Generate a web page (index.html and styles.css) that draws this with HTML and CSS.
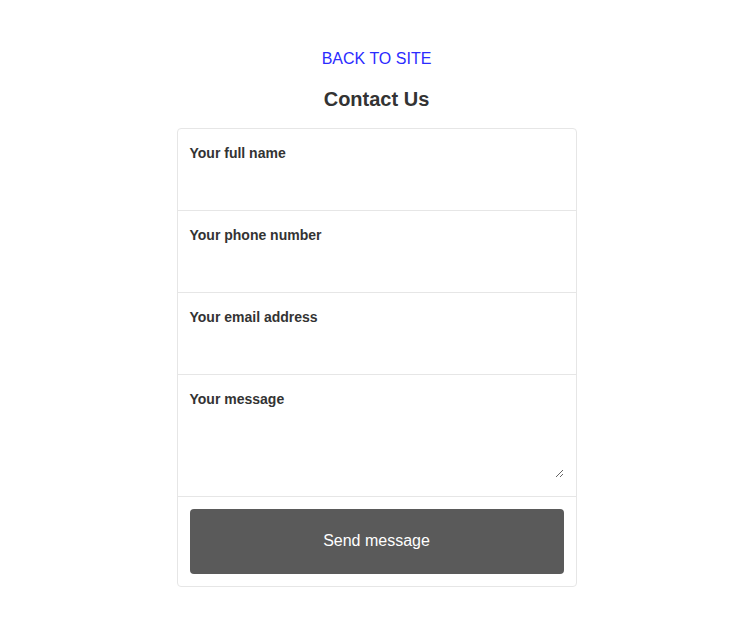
FILE: index.html
```html
<!DOCTYPE html>
<html lang="en">
<head>
<meta charset="utf-8">
<title>Contact Us</title>
<link rel="stylesheet" href="styles.css">
</head>
<body>
<main class="page">
  <a class="back" href="#">BACK TO SITE</a>
  <h1 class="title">Contact Us</h1>
  <form class="card">
    <div class="field">
      <label class="label" for="name">Your full name</label>
      <input class="input" id="name" type="text">
    </div>
    <div class="field">
      <label class="label" for="phone">Your phone number</label>
      <input class="input" id="phone" type="tel">
    </div>
    <div class="field">
      <label class="label" for="email">Your email address</label>
      <input class="input" id="email" type="email">
    </div>
    <div class="field field-msg">
      <label class="label" for="msg">Your message</label>
      <textarea class="textarea" id="msg"></textarea>
    </div>
    <div class="actions">
      <button class="send" type="button">Send message</button>
    </div>
  </form>
</main>
</body>
</html>
```
FILE: styles.css
```css
* { box-sizing: border-box; }
html, body { margin: 0; background: #fff; }
body {
  font-family: "Liberation Sans", Arial, Helvetica, sans-serif;
  color: #333;
}
.page {
  width: 400px;
  margin: 0 auto;
  padding-top: 49px;
  display: flex;
  flex-direction: column;
  align-items: stretch;
}
.back {
  display: block;
  text-align: center;
  color: #2b2bff;
  text-decoration: none;
  font-size: 16px;
  line-height: 20px;
}
.title {
  margin: 18px 0 17px;
  text-align: center;
  font-size: 20px;
  line-height: 24px;
  font-weight: bold;
  color: #333;
}
.card {
  border: 1px solid #e6e6e6;
  border-radius: 4px;
  display: flex;
  flex-direction: column;
}
.field {
  border-bottom: 1px solid #e6e6e6;
  padding: 16px 12px 11px;
  display: flex;
  flex-direction: column;
}
.label {
  font-size: 14px;
  line-height: 17px;
  font-weight: bold;
  color: #333;
}
.input {
  height: 37px;
  border: 0;
  padding: 0;
  outline: none;
  font: inherit;
  background: transparent;
}
.field-msg { padding-bottom: 18px; }
.textarea {
  height: 70px;
  border: 0;
  padding: 0;
  outline: none;
  font: inherit;
  background: transparent;
  resize: vertical;
}
.actions {
  padding: 12px;
}
.send {
  width: 100%;
  height: 65px;
  padding: 0 0 2px;
  border: 0;
  border-radius: 4px;
  background: #5a5a5a;
  color: #fff;
  font-family: "Liberation Sans", Arial, Helvetica, sans-serif;
  font-size: 16px;
  cursor: pointer;
}
```
